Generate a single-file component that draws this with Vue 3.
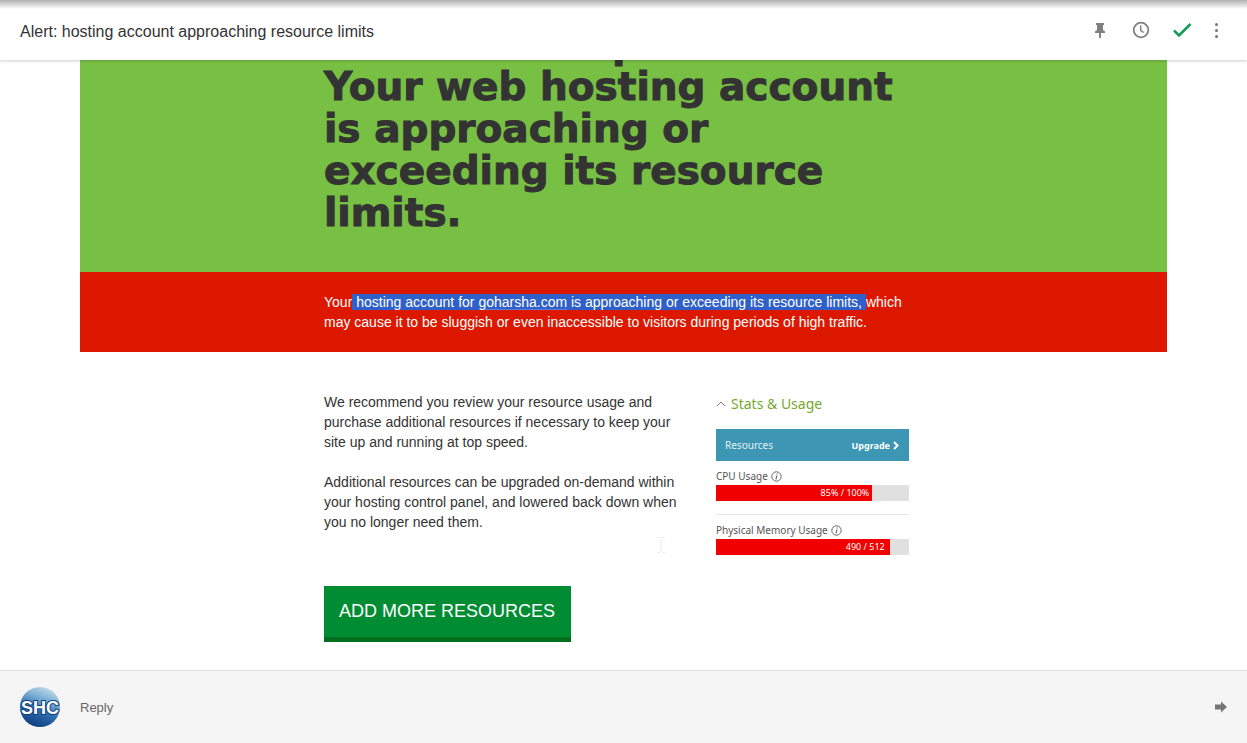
<script setup>
const meters = [
  { id: 'cpu', name: 'CPU Usage', label: '85% / 100%', percent: 81 },
  { id: 'memory', name: 'Physical Memory Usage', label: '490 / 512', percent: 90 }
]
</script>

<template>
  <div class="viewer">
    <header class="topbar">
      <h1 class="subject">Alert: hosting account approaching resource limits</h1>
      <div class="actions">
        <button class="icon-btn" type="button" aria-label="Pin">
          <svg width="24" height="24" viewBox="0 0 24 24"><path fill="#808080" d="M8 5h8v2h-1v5l2 1.500v1.500h-4v4.500l-1 1-1-1V15H7v-1.500L9 12V7H8z" /></svg>
        </button>
        <button class="icon-btn" type="button" aria-label="Snooze">
          <svg width="24" height="24" viewBox="0 0 24 24" fill="none" stroke="#808080"><circle cx="12" cy="12" r="7.300" stroke-width="1.800" /><path d="M11.700 7.500v5l3 2" stroke-width="1.500" /></svg>
        </button>
        <button class="icon-btn" type="button" aria-label="Mark done">
          <svg width="24" height="24" viewBox="0 0 24 24" fill="none" stroke="#0f9d58" stroke-width="2.500"><path d="M4 12.500l5 5L20.500 6" /></svg>
        </button>
        <button class="icon-btn more" type="button" aria-label="More">
          <svg width="24" height="24" viewBox="0 0 24 24" fill="#757575"><circle cx="11.500" cy="6.500" r="1.500" /><circle cx="11.500" cy="12.500" r="1.500" /><circle cx="11.500" cy="18.500" r="1.500" /></svg>
        </button>
      </div>
    </header>

    <main class="message">
      <section class="hero">
        <h2 class="column headline"><span class="lead">p</span>Your web hosting account is approaching or exceeding its resource limits.</h2>
      </section>
      <section class="alert">
        <p class="column">Your<mark> hosting account for <a class="domain" href="#">goharsha.com</a> is approaching or exceeding its resource limits, </mark>which may cause it to be sluggish or even inaccessible to visitors during periods of high traffic.</p>
      </section>
      <section class="column details">
        <div class="copy">
          <p>We recommend you review your resource usage and purchase additional resources if necessary to keep your site up and running at top speed.</p>
          <p>Additional resources can be upgraded on-demand within your hosting control panel, and lowered back down when you no longer need them.</p>
          <svg class="caret" width="8" height="16" viewBox="0 0 8 16" fill="none" stroke="#ebebeb"><path d="M0 .5h3M5 .5h3M4 1v14M0 15.500h3M5 15.500h3" /></svg>
        </div>
        <aside class="stats">
          <h3 class="stats-title">
            <svg width="10" height="6" viewBox="0 0 10 6" fill="none" stroke="#777"><path d="M1 5l4-4 4 4" /></svg>
            Stats &amp; Usage
          </h3>
          <div class="stats-bar">
            <span>Resources</span>
            <a class="upgrade" href="#">Upgrade
              <svg width="6" height="9" viewBox="0 0 6 9" fill="none" stroke="#fff" stroke-width="2"><path d="M1 1l3.500 3.500L1 8" /></svg>
            </a>
          </div>
          <div v-for="m in meters" :key="m.id" class="meter">
            <div class="meter-name">
              {{ m.name }}
              <svg width="11" height="11" viewBox="0 0 11 11" fill="none" stroke="#666"><circle cx="5.500" cy="5.500" r="4.700" /><path d="M5.900 4.600L5 8.400M6.200 2.500l-.2 1" stroke-width="1.200" /></svg>
            </div>
            <div class="track"><div class="fill" :style="{ width: m.percent + '%' }">{{ m.label }}</div></div>
          </div>
        </aside>
      </section>
      <div class="column">
        <button class="cta" type="button">ADD MORE RESOURCES</button>
      </div>
    </main>

    <footer class="replybar">
      <svg class="avatar" width="40" height="40" viewBox="0 0 40 40">
        <defs>
          <linearGradient id="sky" x1="0.700" y1="0" x2="0.300" y2="1">
            <stop offset="0" stop-color="#c4dcea" /><stop offset="0.300" stop-color="#78aed4" /><stop offset="0.600" stop-color="#2c6cae" /><stop offset="1" stop-color="#0d3c7c" />
          </linearGradient>
        </defs>
        <circle cx="20" cy="20" r="20" fill="url(#sky)" />
        <text class="initials" x="20" y="27" text-anchor="middle">SHC</text>
      </svg>
      <button class="reply" type="button">Reply</button>
      <button class="icon-btn send" type="button" aria-label="Send">
        <svg width="12" height="12" viewBox="0 0 12 12"><path fill="#757575" d="M0 3.500h6V.5L12 6l-6 5.500v-3H0z" /></svg>
      </button>
    </footer>
  </div>
</template>

<style>
body {
  margin: 0;
  background: #fff;
}
</style>

<style scoped>
.viewer {
  display: flex;
  flex-direction: column;
  height: 100vh;
  font-family: "Liberation Sans", Arial, sans-serif;
  color: #333;
}
button {
  font-family: inherit;
  border: 0;
  padding: 0;
  background: none;
  cursor: pointer;
}
h1, h2, h3, p {
  margin: 0;
  font-weight: 400;
}
svg {
  display: block;
}
.topbar {
  position: relative;
  z-index: 1;
  flex: none;
  box-sizing: border-box;
  height: 60px;
  padding: 4px 18px 0 20px;
  display: flex;
  align-items: center;
  justify-content: space-between;
  background: linear-gradient(#b0b0b0, #fff 9px);
  box-shadow: 0 1px 3px rgba(0, 0, 0, 0.2);
}
.subject {
  font-size: 16px;
  line-height: 20px;
}
.actions {
  display: flex;
  align-items: center;
  gap: 17px;
  padding-bottom: 4px;
}
.more {
  margin: 0 0 0 -6px;
}
.message {
  flex: 1;
  min-height: 0;
  overflow: hidden;
}
.column {
  box-sizing: border-box;
  max-width: 599px;
  margin: 0 auto;
}
.hero {
  margin: -38px 80px 0;
  padding: 2px 0 38px;
  background: #78c043;
}
.headline {
  font-family: "Arial Black", "DejaVu Sans", sans-serif;
  font-size: 39px;
  line-height: 42px;
  font-weight: 900;
  color: #333;
  -webkit-text-stroke: 1px #333;
}
.lead {
  display: block;
  padding-left: 288px;
}
.alert {
  margin: 0 80px;
  padding: 20px 0;
  background: #dc1900;
  color: #fff;
  font-size: 14px;
  line-height: 20px;
}
mark {
  background: #2f5fc8;
  color: #fff;
}
.domain {
  color: inherit;
  text-decoration: underline #5c80d8;
  text-underline-offset: 2px;
}
.details {
  display: flex;
  justify-content: space-between;
  padding: 40px 14px 0 0;
}
.copy {
  position: relative;
  width: 366px;
  font-size: 14px;
  line-height: 20px;
}
.copy p + p {
  margin-top: 20px;
}
.caret {
  position: absolute;
  left: 333px;
  top: 145px;
}
.stats {
  width: 193px;
  font-family: "Noto Sans", "Open Sans", sans-serif;
  font-size: 10px;
  color: #555;
}
.stats-title {
  display: flex;
  align-items: center;
  gap: 5px;
  font-size: 14px;
  line-height: 24px;
  color: #74a82f;
}
.stats-bar {
  display: flex;
  align-items: center;
  justify-content: space-between;
  height: 32px;
  margin-top: 13px;
  padding: 0 10px 0 9px;
  background: #3c96b4;
  color: #e4f1f5;
}
.upgrade {
  display: flex;
  align-items: center;
  gap: 3px;
  font-size: 9px;
  font-weight: 700;
  color: #fff;
  text-decoration: none;
}
.meter {
  padding-top: 7px;
}
.meter + .meter {
  margin-top: 13px;
  border-top: 1px solid #e6e6e6;
}
.meter-name {
  display: flex;
  align-items: center;
  gap: 3px;
  line-height: 17px;
}
.track {
  height: 16px;
  background: #e0e0e0;
}
.fill {
  box-sizing: border-box;
  height: 100%;
  padding-right: 3px;
  background: #f00000;
  color: #fff;
  font-size: 9px;
  line-height: 15px;
  text-align: right;
}
.meter:last-child .fill {
  padding-right: 5px;
}
.cta {
  display: block;
  margin-top: 31px;
  height: 56px;
  padding: 0 16px 0 15px;
  border-bottom: 5px solid #00701f;
  background: #008c32;
  color: #fff;
  font-size: 18px;
}
.replybar {
  flex: none;
  box-sizing: border-box;
  height: 73px;
  display: flex;
  align-items: center;
  padding: 0 20px;
  border-top: 1px solid #e0e0e0;
  background: #f5f5f5;
}
.initials {
  font-family: "Liberation Sans", Arial, sans-serif;
  font-size: 18px;
  font-weight: 700;
  fill: #fff;
  stroke: #123f78;
  stroke-width: 2px;
  paint-order: stroke;
}
.reply {
  margin-left: 20px;
  font-size: 13px;
  color: #666;
}
.send {
  margin-left: auto;
}
</style>
